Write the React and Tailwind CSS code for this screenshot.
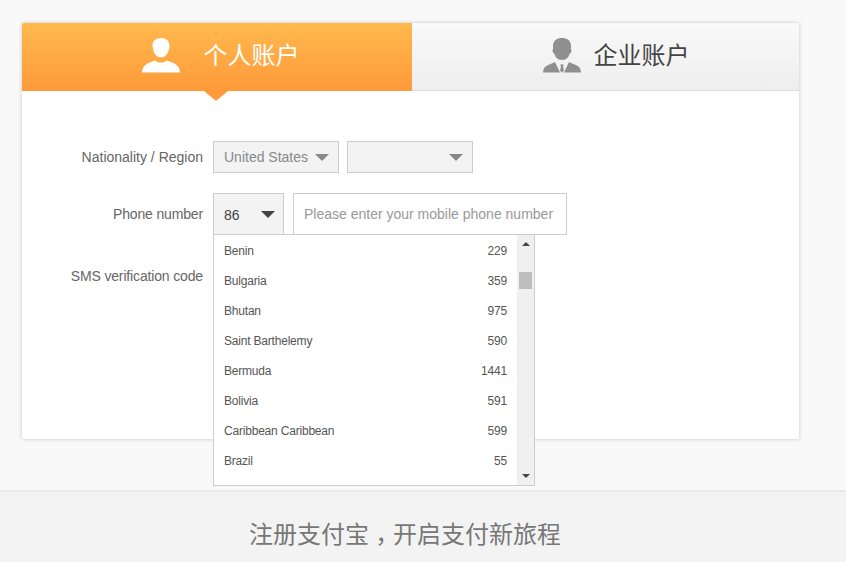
import React from "react";

const countries = [
  ["Benin", "229"],
  ["Bulgaria", "359"],
  ["Bhutan", "975"],
  ["Saint Barthelemy", "590"],
  ["Bermuda", "1441"],
  ["Bolivia", "591"],
  ["Caribbean Caribbean", "599"],
  ["Brazil", "55"],
];

const PersonIcon = () => (
  <svg width="38" height="35" viewBox="0 0 38 35" fill="#fff">
    <path d="M19 0c-5 0-8.500 3-8.500 7.500 0 2 .5 3.500 1 5 .7 3.500 3.500 7 7.500 7s6.800-3.500 7.500-7c.5-1.500 1-3 1-5C27.500 3 24 0 19 0z" />
    <path d="M0 34.500c0-1 .3-3.500 1.500-5.500 3-4 8-5 11.500-6.500 2 1.500 4 2 6 2s4-.5 6-2c3.500 1.500 8.500 2.500 11.500 6.500 1.200 2 1.500 4.500 1.500 5.500z" />
  </svg>
);

const BusinessIcon = () => (
  <svg width="38" height="35" viewBox="0 0 38 35" fill="#8f8f8f">
    <path d="M19 0c-5 0-9 2.500-9 8 0 1 0 2 .2 3-.7 0-.8 1-.5 2.500.3 1.300.8 2 1.500 2 1 3 3 6.500 7.800 6.500s6.800-3.500 7.800-6.500c.7 0 1.200-.7 1.500-2 .3-1.500.2-2.500-.5-2.500.2-1 .2-2 .2-3 0-5.500-4-8-9-8z" />
    <path d="M0 34.500c0-2 .8-4.500 2.500-6 2.500-2 6-2.700 9.500-4.500l5 10.500zM38 34.500c0-2-.8-4.500-2.500-6-2.500-2-6-2.700-9.500-4.500l-5 10.500z" />
    <path d="M17.200 26.500h3.600l-.8 2 1 4-2 2-2-2 1-4z" />
  </svg>
);

const Arrow = ({ className }) => (
  <span className={`h-0 w-0 border-x-[7px] border-t-[7px] border-x-transparent ${className}`} />
);

const App = () => {
  return (
    <div className="h-[562px] overflow-hidden bg-[#f9f9f9] font-['Liberation_Sans','Noto_Sans_CJK_TC',sans-serif] text-[14px] text-[#666]">
      <div className="ml-[22px] mt-[23px] h-[416px] w-[777px] rounded-[2px] bg-white shadow-[0_0_4px_rgba(0,0,0,0.2)]">
        {/* tabs */}
        <div className="flex h-[68px]">
          <div className="relative flex w-[390px] items-center justify-center gap-[24px] rounded-tl-[2px] bg-gradient-to-b from-[#ffb94d] to-[#fe9a3b] pb-[3px] pl-[7px] text-[24px] text-white">
            <PersonIcon />
            <span className="pt-[1px] leading-none">个人账户</span>
            <span className="absolute left-[182px] top-[68px] h-0 w-0 border-x-[12px] border-t-[10px] border-x-transparent border-t-[#fe9a3b]" />
          </div>
          <div className="flex flex-1 items-center justify-center gap-[13px] rounded-tr-[2px] border-b border-[#dcdcdc] bg-gradient-to-b from-[#f9f9f9] to-[#eeeeee] pb-[3px] pl-[21px] text-[24px] text-[#444]">
            <BusinessIcon />
            <span className="pt-[2px] leading-none">企业账户</span>
          </div>
        </div>

        {/* form */}
        <div className="pt-[50px]">
          <div className="flex h-[32px] items-center">
            <label className="w-[181px] text-right">Nationality / Region</label>
            <div className="ml-[10px] flex h-full w-[126px] items-center justify-between border border-[#ccc] bg-[#f3f3f3] pl-[10px] pr-[9px] text-[#888]">
              <span>United States</span>
              <Arrow className="border-t-[#888]" />
            </div>
            <div className="ml-[8px] flex h-full w-[126px] items-center justify-end border border-[#ccc] bg-[#f3f3f3] pr-[9px]">
              <Arrow className="border-t-[#888]" />
            </div>
          </div>

          <div className="mt-[20px] flex h-[42px] items-center">
            <label className="w-[181px] text-right tracking-[-0.15px]">Phone number</label>
            <div className="relative ml-[10px] h-full">
              <div className="flex h-full w-[71px] items-center justify-between border border-[#ccc] bg-[#f3f3f3] pl-[10px] pr-[8px] text-[#444]">
                <span className="pt-[3px]">86</span>
                <Arrow className="border-t-[#444]" />
              </div>
              <div className="absolute left-0 top-[41px] z-10 flex h-[252px] w-[322px] border border-[#ccc] bg-white">
                <ul className="flex-1 pl-[10px] pr-[10px] pt-[1px] text-[12px] tracking-[-0.2px] text-[#555]">
                  {countries.map(([name, code]) => (
                    <li key={name} className="flex h-[30px] items-center justify-between">
                      <span>{name}</span>
                      <span>{code}</span>
                    </li>
                  ))}
                </ul>
                <div className="relative w-[17px] bg-[#f0f0f0]">
                  <span className="absolute left-[5px] top-[7px] h-0 w-0 border-x-[4px] border-b-[4px] border-x-transparent border-b-[#444]" />
                  <span className="absolute left-[2px] top-[37px] h-[17px] w-[13px] bg-[#bdbdbd]" />
                  <span className="absolute bottom-[7px] left-[5px] h-0 w-0 border-x-[4px] border-t-[4px] border-x-transparent border-t-[#444]" />
                </div>
              </div>
            </div>
            <input
              readOnly
              placeholder="Please enter your mobile phone number"
              className="ml-[9px] h-full w-[274px] border border-[#ccc] bg-white px-[10px] placeholder:text-[#999]"
            />
          </div>

          <div className="mt-[31px] flex">
            <label className="w-[181px] text-right tracking-[-0.15px]">SMS verification code</label>
          </div>
        </div>
      </div>

      {/* footer */}
      <div className="mt-[51px] flex h-[72px] items-center justify-center border-t-2 border-[#ebebeb] bg-[#f3f3f3] pr-[36px] pt-[16px] text-[24px] text-[#777]">
        <span>
          注册支付宝<span className="inline-block translate-y-[7px]">，</span>开启支付新旅程
        </span>
      </div>
    </div>
  );
};

export default App;
